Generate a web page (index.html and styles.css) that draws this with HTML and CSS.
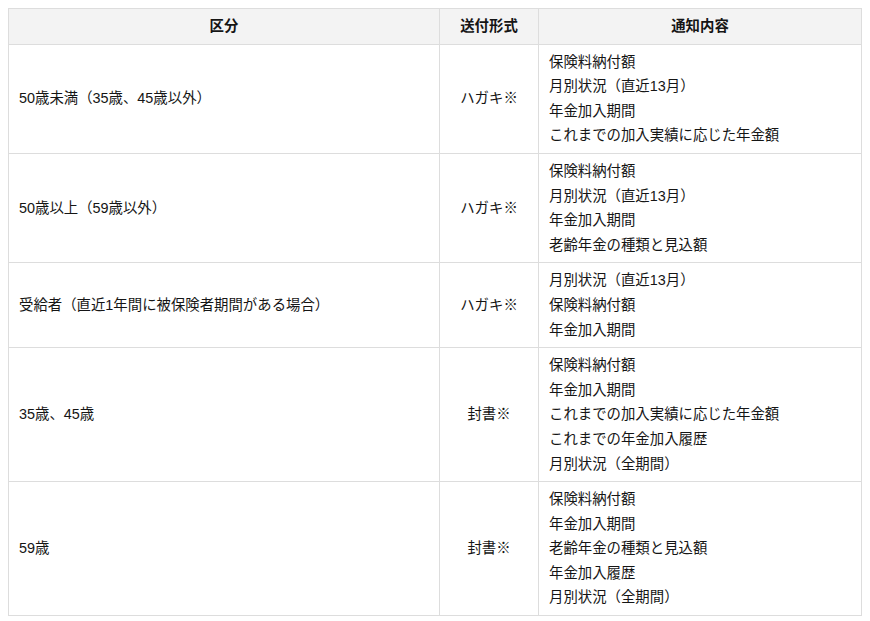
FILE: index.html
```html
<!DOCTYPE html>
<html lang="ja">
<head>
<meta charset="utf-8">
<link rel="stylesheet" href="styles.css">
</head>
<body>
<table class="notice-table">
  <thead>
    <tr>
      <th class="col-kubun">区分</th>
      <th class="col-form">送付形式</th>
      <th class="col-content">通知内容</th>
    </tr>
  </thead>
  <tbody>
    <tr>
      <td>50歳未満（35歳、45歳以外）</td>
      <td class="center">ハガキ※</td>
      <td>保険料納付額<br>月別状況（直近13月）<br>年金加入期間<br>これまでの加入実績に応じた年金額</td>
    </tr>
    <tr>
      <td>50歳以上（59歳以外）</td>
      <td class="center">ハガキ※</td>
      <td>保険料納付額<br>月別状況（直近13月）<br>年金加入期間<br>老齢年金の種類と見込額</td>
    </tr>
    <tr>
      <td>受給者（直近1年間に被保険者期間がある場合）</td>
      <td class="center">ハガキ※</td>
      <td>月別状況（直近13月）<br>保険料納付額<br>年金加入期間</td>
    </tr>
    <tr>
      <td>35歳、45歳</td>
      <td class="center">封書※</td>
      <td>保険料納付額<br>年金加入期間<br>これまでの加入実績に応じた年金額<br>これまでの年金加入履歴<br>月別状況（全期間）</td>
    </tr>
    <tr>
      <td>59歳</td>
      <td class="center">封書※</td>
      <td>保険料納付額<br>年金加入期間<br>老齢年金の種類と見込額<br>年金加入履歴<br>月別状況（全期間）</td>
    </tr>
  </tbody>
</table>
</body>
</html>
```

FILE: styles.css
```css
html, body {
  background: #ffffff;
}
body {
  margin: 8px;
  font-family: "Liberation Sans", "Noto Sans CJK JP", sans-serif;
  font-size: 14.4px;
  color: #151515;
}
.notice-table {
  width: 100%;
  border-collapse: collapse;
  table-layout: fixed;
  line-height: 24.6px;
}
.notice-table th,
.notice-table td {
  box-sizing: border-box;
  border: 1px solid #dddddd;
  padding: 5px 10px;
  vertical-align: middle;
  text-align: left;
}
.notice-table th.col-kubun { width: 431px; }
.notice-table th.col-form { width: 99px; }
.notice-table th {
  background: #f3f3f3;
  font-weight: bold;
  text-align: center;
}
.notice-table td.center {
  text-align: center;
}
```
